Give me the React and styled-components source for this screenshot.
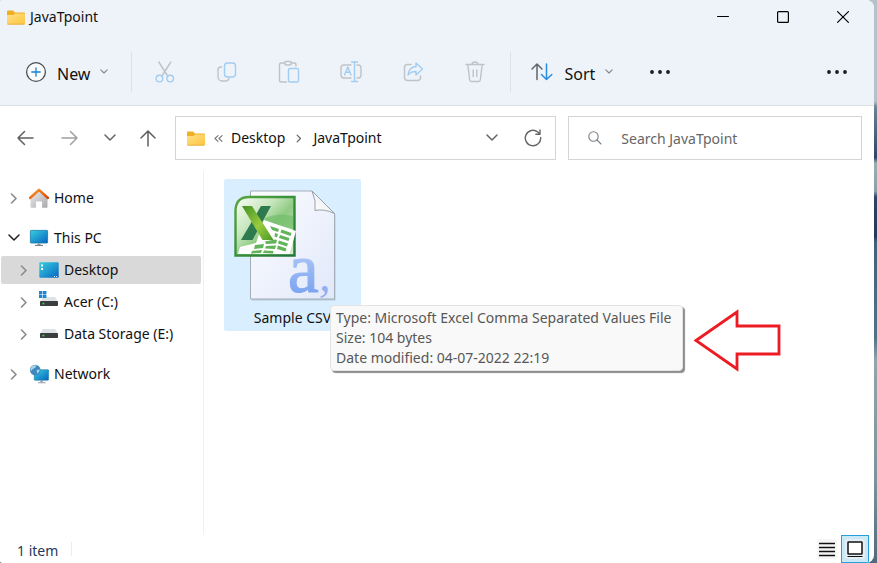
import React from "react";
import styled, { createGlobalStyle, css } from "styled-components";

const GlobalStyle = createGlobalStyle`
  *, *::before, *::after { box-sizing: border-box; }
  body { margin: 0; }
  button, input { font: inherit; color: inherit; }
`;

const DesktopBackdrop = styled.div`
  min-height: 100vh;
  display: flex;
  padding-right: 3px;
  background: linear-gradient(
    180deg,
    #b3c3c8 0%, #b3c3c8 18%, #6b8494 19%, #2f4566 28%,
    #9bafb3 29%, #8aa0a8 34%, #2d4464 35%, #24385c 42%,
    #40617a 43%, #4f7385 60%, #93a4ab 64%, #7e939c 85%, #52697a 100%
  );
  font-family: "Noto Sans", "Open Sans", sans-serif;
  font-size: 14px;
  line-height: 20px;
  color: #111;
`;

const Window = styled.div`
  flex: 1;
  min-width: 0;
  display: flex;
  flex-direction: column;
  background: #fff;
  border-radius: 2px 8px 8px 2px;
  overflow: hidden;
`;

const Chrome = styled.header`
  background: #eef3f9;
  border-bottom: 1px solid #dbe0e4;
`;

const TitleBar = styled.div`
  display: flex;
  align-items: center;
  height: 34px;
  padding: 0 1px 0 7px;
`;

const WindowTitle = styled.h1`
  flex: 1;
  margin: 0 0 0 5px;
  font-size: 14px;
  font-weight: 400;
`;

const PlainButton = styled.button`
  display: inline-flex;
  align-items: center;
  justify-content: center;
  padding: 0;
  border: 0;
  background: transparent;
  width: ${(p) => p.$width || 40}px;
  height: 40px;
  flex: none;
`;

const CaptionButton = styled(PlainButton)`
  height: 34px;
  width: 60px;
`;

const Toolbar = styled.div`
  display: flex;
  align-items: center;
  height: 71px;
  padding: 4px 17px 0 25px;
`;

const MenuButton = styled.button`
  display: inline-flex;
  align-items: center;
  gap: 10px;
  height: 40px;
  padding: 0;
  border: 0;
  background: transparent;
  font-size: 16px;
  flex: none;

  span { padding: 4px 0 0; }
`;

const Divider = styled.div`
  width: 1px;
  height: ${(p) => p.$height || 40}px;
  margin: ${(p) => p.$margin || "0"};
  background: ${(p) => p.$color || "#dce1e6"};
  flex: none;
`;

const Spacer = styled.div`
  flex: 1;
`;

const NavBar = styled.nav`
  display: flex;
  align-items: center;
  padding: 10px 12px 11px 2px;
`;

const NavButtons = styled.div`
  display: grid;
  grid-template-columns: 46px 44px 36px 40px;
  margin-right: 7px;
`;

const AddressBar = styled.div`
  flex: 7 1 0;
  min-width: 0;
  height: 44px;
  display: flex;
  align-items: center;
  padding: 0 2px 0 11px;
  border: 1px solid #d4d4d4;
  background: #fff;
`;

const Crumb = styled.a`
  color: #111;
  text-decoration: none;
`;

const CrumbSeparator = styled.span`
  display: flex;
  margin: 0 11px;
`;

const SearchBox = styled.label`
  flex: 5 1 0;
  min-width: 0;
  height: 44px;
  margin-left: 12px;
  display: flex;
  align-items: center;
  gap: 18px;
  padding: 0 12px 0 18px;
  border: 1px solid #d4d4d4;
  background: #fff;
`;

const SearchInput = styled.input`
  flex: 1;
  min-width: 0;
  border: 0;
  outline: 0;
  padding: 2px 0 0;
  background: transparent;

  &::placeholder { color: #666; opacity: 1; }
`;

const Body = styled.div`
  flex: 1;
  display: flex;
`;

const Sidebar = styled.aside`
  flex: none;
  width: 204px;
  padding: 13px 2px 0 1px;
  border-right: 1px solid #f0f0f0;
`;

const Tree = styled.ul`
  list-style: none;
  margin: 0;
  padding: 0;
  display: flex;
  flex-direction: column;
  gap: ${(p) => (p.$nested ? 4 : 12)}px;
  ${(p) => p.$nested && css`margin-top: 4px;`}
`;

const TreeRow = styled.a`
  display: grid;
  grid-template-columns: 20px 20px 1fr;
  align-items: center;
  column-gap: 5px;
  height: 28px;
  padding-left: ${(p) => (p.$nested ? 13 : 3)}px;
  border-radius: 2px;
  background: ${(p) => (p.$selected ? "#d9d9d9" : "transparent")};
  color: #111;
  text-decoration: none;
  white-space: nowrap;

  svg { justify-self: center; }
`;

const Content = styled.main`
  flex: 1;
  min-width: 0;
  padding: 8px 20px 20px;
`;

const FileTile = styled.div`
  position: relative;
  width: 137px;
  display: flex;
  flex-direction: column;
  align-items: center;
  padding: 9px 0 3px;
  border-radius: 2px;
  background: #d9eeff;
`;

const FileArtwork = styled.svg`
  overflow: visible;
`;

const FileName = styled.div`
  margin-top: 4px;
`;

const Tooltip = styled.div`
  position: absolute;
  top: 126px;
  left: 106px;
  padding: 2px 11px 2px 5px;
  border: 1px solid #e3e3e3;
  border-radius: 4px;
  background: #f9f9f9;
  box-shadow: 2px 2px 1px #8c8c8c;
  color: #575757;
  white-space: nowrap;
`;

const Pointer = styled.svg`
  position: absolute;
  top: 130px;
  left: 469px;
`;

const StatusBar = styled.footer`
  display: flex;
  align-items: center;
  height: 28px;
  padding: 0 5px 0 17px;
  color: #1e395b;
`;

const ItemCount = styled.span`
  padding-top: 3px;
`;

const ViewButton = styled.button`
  display: inline-flex;
  align-items: center;
  justify-content: center;
  width: 28px;
  height: 28px;
  padding: 0;
  border: 1px solid ${(p) => (p.$active ? "#26a0da" : "transparent")};
  background: ${(p) => (p.$active ? "#cbe8f6" : "transparent")};
`;

const Line = ({ w = 20, h = w, box, color = "#5f5f5f", sw = 1.4, children }) => (
  <svg width={w} height={h} viewBox={box || `0 0 ${w} ${h}`} fill="none" stroke={color}
    strokeWidth={sw} strokeLinecap="round" strokeLinejoin="round" aria-hidden="true">
    {children}
  </svg>
);

const GREY = "#bfc3c7";
const BLUE = "#a3cdf0";

const FolderIcon = () => (
  <svg width="18" height="15" viewBox="0 0 18 15" aria-hidden="true">
    <defs>
      <linearGradient id="folder" x1="0" y1="0" x2="1" y2="1">
        <stop offset="0" stopColor="#ffe08a" /><stop offset="1" stopColor="#fdc53c" />
      </linearGradient>
    </defs>
    <path d="M0 1.5Q0 .5 1 .5H6L8 2.5H17Q18 2.5 18 3.5V8H0Z" fill="#efaf25" />
    <path d="M0 5H6.5L8 3.5H17Q18 3.5 18 4.5V13.5Q18 14.5 17 14.5H1Q0 14.5 0 13.5Z" fill="url(#folder)" />
    <path d="M.5 14.2H17.5" stroke="#e2a52c" strokeWidth=".7" />
  </svg>
);

const NewIcon = () => (
  <Line w={22} color="#4a4f55" sw={1.3}>
    <circle cx="11" cy="11" r="9.4" fill="#f8fafc" />
    <path d="M11 6.8V15.2M6.8 11H15.2" stroke="#1780d0" />
  </Line>
);
const SmallChevron = () => (
  <Line w={8} h={5} color="#858585" sw={1.1}><path d="M.8 .8L4 4L7.2 .8" /></Line>
);
const Chevron = ({ dir = "down", color = "#666", small }) => {
  if (dir === "down") return <Line w={12} h={8} color={color} sw={1.5}><path d="M1 1L6 6L11 1" /></Line>;
  return <Line w={small ? 6 : 8} h={small ? 9 : 11} box="0 0 8 11" color={color} sw={1.6}><path d="M1.5 1L6 5.5L1.5 10" /></Line>;
};
const CutIcon = () => (
  <Line w={22} color={GREY}>
    <path d="M4.8 1L13.7 15M16.8 1L7.9 15" />
    <circle cx="5.4" cy="17.6" r="3.3" stroke={BLUE} /><circle cx="16.2" cy="17.6" r="3.3" stroke={BLUE} />
  </Line>
);
const CopyIcon = () => (
  <Line w={22} color={GREY}>
    <path d="M5.5 6H5A3 3 0 0 0 2 9V16A4 4 0 0 0 6 20H9.5A3.5 3.5 0 0 0 13 17.5" />
    <rect x="8.5" y="2" width="11" height="14" rx="3" stroke={BLUE} />
  </Line>
);
const PasteIcon = () => (
  <Line w={22} h={24} color={GREY}>
    <path d="M7 3H3Q1.5 3 1.5 4.5V20.5Q1.5 22 3 22H8.5M13 3H16.5Q18 3 18 4.5V6" />
    <rect x="6.5" y="1.5" width="7" height="3.5" rx="1.7" />
    <rect x="10.5" y="8.5" width="10" height="13.5" rx="1.5" stroke={BLUE} />
  </Line>
);
const RenameIcon = () => (
  <Line w={24} color={GREY}>
    <path d="M12 5H5A3 3 0 0 0 2 8V15A3 3 0 0 0 5 18H12M18 5H19A3 3 0 0 1 22 8V15A3 3 0 0 1 19 18H18" />
    <path d="M12.5 2H18.5M12.5 21.5H18.5M15.5 2V21.5M5.5 15L8.8 7L12 15M6.7 12.3H10.8" stroke={BLUE} />
  </Line>
);
const ShareIcon = () => (
  <Line w={22} color={GREY}>
    <path d="M9 3.5H5.5A3 3 0 0 0 2.5 6.5V16.5A3 3 0 0 0 5.5 19.5H15.5A3 3 0 0 0 18.5 16.5V15" />
    <path d="M14 2L20.5 8L14 14V10.5C10.5 10.3 8 11.5 6 14C6.4 9.2 9 6 14 5.5Z" stroke={BLUE} />
  </Line>
);
const DeleteIcon = () => (
  <Line w={22} color={GREY}>
    <path d="M2 3.5H20M8 3.3A3 2.3 0 0 1 14 3.3M3.8 3.5L5.6 18.5Q5.8 20.5 7.5 20.5H14.5Q16.2 20.5 16.4 18.5L18.2 3.5M9.2 9V15.5M12.8 9V15.5" />
  </Line>
);
const SortIcon = () => (
  <Line w={24} h={20} color="#62666b" sw={1.5}>
    <path d="M7 17.5V2M2 7L7 2L12 7" />
    <path d="M16.5 2V17.5M11.5 12.5L16.5 17.5L21.8 12.5" stroke="#2b8bdc" />
  </Line>
);
const DotsIcon = () => (
  <svg width="22" height="6" viewBox="0 0 22 6" fill="#1b1b1b" aria-hidden="true">
    <circle cx="3" cy="3" r="1.9" /><circle cx="11" cy="3" r="1.9" /><circle cx="19" cy="3" r="1.9" />
  </svg>
);
const ArrowIcon = ({ dir, color }) => (
  <Line w={18} color={color} sw={1.5}>
    {dir === "left" && <path d="M17 9H2M8.5 2.5L2 9L8.5 15.5" />}
    {dir === "right" && <path d="M1 9H16M9.5 2.5L16 9L9.5 15.5" />}
    {dir === "up" && <path d="M9 17V2M2 9L9 2L16 9" />}
  </Line>
);
const RefreshIcon = () => (
  <Line w={18} color="#666" sw={1.4}>
    <path d="M16.7 8.5A7.7 7.7 0 1 1 13.8 3L16 5M16 1V5.2H11.8" />
  </Line>
);
const SearchIcon = () => (
  <Line w={16} color="#7c828c" sw={1.1}><circle cx="6.5" cy="6.5" r="4.7" /><path d="M10 10L14 14" /></Line>
);
const HomeIcon = () => (
  <svg width="20" height="20" viewBox="0 0 20 20" aria-hidden="true">
    <defs>
      <linearGradient id="wall" x1="0" y1="0" x2="1" y2="1"><stop stopColor="#eee" /><stop offset="1" stopColor="#a9a9ac" /></linearGradient>
      <linearGradient id="roof" x1="0" y1="0" x2="1" y2="1"><stop stopColor="#fb9a28" /><stop offset="1" stopColor="#d8490b" /></linearGradient>
    </defs>
    <path d="M1.5 10L10 2L18.5 10V19Q18.5 19.7 17.8 19.7H13V13.5H7V19.7H2.2Q1.5 19.7 1.5 19Z" fill="url(#wall)" />
    <path d="M1 10L10 1.8L19 10" fill="none" stroke="url(#roof)" strokeWidth="2.5" strokeLinejoin="round" strokeLinecap="round" />
  </svg>
);
const ScreenGradient = () => (
  <defs>
    <linearGradient id="screen" x1="0" y1="0" x2="1" y2="1"><stop stopColor="#36d0e0" /><stop offset="1" stopColor="#0864c0" /></linearGradient>
  </defs>
);
const PcIcon = () => (
  <svg width="20" height="18" viewBox="0 0 20 18" aria-hidden="true">
    <ScreenGradient />
    <rect x="1.4" y="1.4" width="17.2" height="12.6" rx=".6" fill="url(#screen)" stroke="#1478a6" strokeWidth=".8" />
    <path d="M8.5 14.4H11.5V16H8.5Z" fill="#8d9ba5" /><path d="M6 16.4H14" stroke="#68747d" />
  </svg>
);
const DesktopIcon = () => (
  <svg width="20" height="16" viewBox="0 0 20 16" aria-hidden="true">
    <ScreenGradient />
    <rect x=".3" y=".3" width="19.4" height="15.4" rx="1" fill="url(#screen)" />
    <path d="M2 2.5H4V4.5H2ZM2 6H4V8H2Z" fill="#fff" />
    <path d="M15 14.5H16M17 14.5H18" stroke="#d9efff" />
  </svg>
);
const DriveIcon = ({ windows }) => (
  <svg width="20" height="22" viewBox="0 0 20 22" aria-hidden="true">
    <path d="M4 6H16L18.8 10.5H1.2Z" fill="#dfe2e5" />
    <rect x="1" y="10" width="18" height="5" rx=".8" fill="#3c3d3f" />
    <rect x="3.5" y="11.8" width="1.8" height="1.6" fill="#35e04c" />
    {windows && <path d="M0 0H3.4V3.2H0ZM4 0H7.4V3.2H4ZM0 3.8H3.4V7H0ZM4 3.8H7.4V7H4Z" fill="#1d84d3" />}
  </svg>
);
const NetworkIcon = () => (
  <svg width="20" height="20" viewBox="0 0 21 20" aria-hidden="true">
    <ScreenGradient />
    <rect x="5.5" y="5.5" width="15" height="11" rx=".6" fill="url(#screen)" stroke="#1478a6" strokeWidth=".6" />
    <path d="M12 16.5H14.5V18.5H12Z" fill="#8d9ba5" /><path d="M9.5 19.2H17.5" stroke="#8997a1" />
    <circle cx="6.5" cy="5.8" r="5.6" fill="#3f88bd" />
    <path d="M3 2.2Q6 0 8 1.2L6.5 3.5L4 4.8L2 7Q.6 5 3 2.2ZM8 6L11 5Q11.5 8 8.5 9.5Z" fill="#a9d4e6" />
  </svg>
);

const CsvIcon = () => (
  <FileArtwork width="121" height="116" viewBox="0 0 121 116" aria-hidden="true">
    <defs>
      <linearGradient id="paper" x1="0" y1="0" x2="1" y2="1"><stop stopColor="#fdfdff" /><stop offset="1" stopColor="#e1e8fa" /></linearGradient>
      <linearGradient id="badge" x1="0" y1="0" x2="1" y2="1"><stop stopColor="#fafdf7" /><stop offset=".35" stopColor="#c8e6bd" /><stop offset=".55" stopColor="#8fcb84" /><stop offset="1" stopColor="#d7eccb" /></linearGradient>
      <linearGradient id="rim" x1="0" y1="0" x2="1" y2="1"><stop stopColor="#55a83e" /><stop offset="1" stopColor="#207638" /></linearGradient>
      <linearGradient id="leaf" x1="0" y1="0" x2="1" y2="1"><stop stopColor="#3f8f24" /><stop offset=".55" stopColor="#9acb3d" /><stop offset="1" stopColor="#4d9928" /></linearGradient>
      <linearGradient id="glyph" x1="0" y1="0" x2="0" y2="1"><stop offset=".3" stopColor="#aac5f6" /><stop offset="1" stopColor="#6c98ee" /></linearGradient>
      <linearGradient id="fold" x1="0" y1="1" x2="1" y2="0"><stop stopColor="#fff" /><stop offset=".5" stopColor="#f4f4f6" /><stop offset="1" stopColor="#a8adb5" /></linearGradient>
    </defs>
    <path d="M19.5 4H80.5L103.5 27V112.5H19.5Z" fill="#9fb0c0" opacity=".6" />
    <path d="M18.5 3H80L102.5 25.5V111H18.5Z" fill="url(#paper)" stroke="#a3adb8" />
    <path d="M80 3Q84.5 13 83 22.5Q92 20.5 102.5 25.5Z" fill="url(#fold)" stroke="#8f969e" strokeWidth=".9" />
    <text x="56" y="104" fontFamily="Liberation Serif, serif" fontSize="69" fill="url(#glyph)" stroke="url(#glyph)" strokeWidth="1.2">a</text>
    <text x="87" y="103" fontFamily="Liberation Serif, serif" fontStyle="italic" fontSize="46" fill="#8fb0f2">,</text>
    <path d="M3.5 67.5V21.5Q4.5 9 17 9H62.5V67.5Z" fill="url(#badge)" stroke="url(#rim)" strokeWidth="2.4" />
    <path d="M33 30Q48 24 61 28V41L32 33Z" fill="#70bd69" opacity=".7" />
    <path d="M32 32L64 43L57.5 66H6L8 59L24 55Z" fill="#fff" />
    <g fill="#62b45b">
      <path d="M38 38L47 41L46 44L40 42ZM49.5 41.5L59.5 45L58.5 48L48.5 44.5Z" />
      <path d="M43 45L46 46L45 49.5L42.5 48.5ZM48 47L57.5 50L56.5 53L47 50Z" />
      <path d="M33 53.5L43 51.5L45 52L44 55.5L34 56ZM47 52.5L56 55.5L55 58.5L46 55.5Z" />
      <path d="M23 57L32 56L31 60L22 61ZM34 58L44 57.5L43 61L33 60.5ZM46 57.5L54.5 60.5L53.5 63.5L45 61Z" />
      <path d="M20 63L30 62L29 65L19 65.5ZM32 62.5L41.5 63L41 65.5L31 65Z" />
    </g>
    <path d="M29 18H39L20.5 52H9Z" fill="#2d7a4e" />
    <path d="M10 18H20L41.5 52H30.5Z" fill="url(#leaf)" />
  </FileArtwork>
);

const ListViewIcon = () => (
  <svg width="20" height="20" viewBox="0 0 20 20" aria-hidden="true">
    <rect width="20" height="20" rx="2" fill="#f5f5f5" />
    <path d="M2 4.5H18M2 8.5H18M2 12.5H18M2 16.5H18" stroke="#111" strokeWidth="1.3" />
  </svg>
);
const LargeViewIcon = () => (
  <svg width="20" height="20" viewBox="0 0 20 20" aria-hidden="true">
    <rect width="20" height="20" rx="2" fill="#e4eef5" />
    <rect x="3" y="3" width="14" height="12" rx=".5" fill="#fff" stroke="#111" strokeWidth="1.5" />
    <path d="M2.5 17.5H17.5" stroke="#111" strokeWidth="1.2" />
  </svg>
);

const editActions = [
  ["Cut", CutIcon], ["Copy", CopyIcon], ["Paste", PasteIcon],
  ["Rename", RenameIcon], ["Share", ShareIcon], ["Delete", DeleteIcon],
];

const drives = [
  { label: "Desktop", icon: <DesktopIcon />, selected: true },
  { label: "Acer (C:)", icon: <DriveIcon windows /> },
  { label: "Data Storage (E:)", icon: <DriveIcon /> },
];

const TreeItem = ({ label, icon, open, nested, selected, children }) => (
  <li>
    <TreeRow href="#" $nested={nested} $selected={selected}>
      <Chevron dir={open ? "down" : "right"} color={open ? "#222" : "#8a8a8a"} />
      {icon}
      {label}
    </TreeRow>
    {children}
  </li>
);

export default function App() {
  return (
    <DesktopBackdrop>
      <GlobalStyle />
      <Window>
        <Chrome>
          <TitleBar>
            <FolderIcon />
            <WindowTitle>JavaTpoint</WindowTitle>
            <CaptionButton aria-label="Minimize"><Line w={12} color="#000" sw={1}><path d="M.5 5.5H11.5" /></Line></CaptionButton>
            <CaptionButton aria-label="Maximize"><Line w={12} color="#000" sw={1.2}><rect x=".6" y=".6" width="10.8" height="10.8" rx="1" /></Line></CaptionButton>
            <CaptionButton aria-label="Close"><Line w={12} color="#000" sw={1.2}><path d="M.6 .6L11.4 11.4M11.4 .6L.6 11.4" /></Line></CaptionButton>
          </TitleBar>
          <Toolbar>
            <MenuButton><NewIcon /><span>New</span><SmallChevron /></MenuButton>
            <Divider $margin="0 2px 0 23px" />
            {editActions.map(([name, Icon]) => (
              <PlainButton key={name} $width={62} aria-label={name} disabled><Icon /></PlainButton>
            ))}
            <Divider $margin="0 19px 0 4px" />
            <MenuButton><SortIcon /><span>Sort</span><SmallChevron /></MenuButton>
            <Divider $margin="0 26px 0 0" $color="transparent" />
            <PlainButton aria-label="See more"><DotsIcon /></PlainButton>
            <Spacer />
            <PlainButton aria-label="More options"><DotsIcon /></PlainButton>
          </Toolbar>
        </Chrome>
        <NavBar aria-label="Location">
          <NavButtons>
            <PlainButton $width={46} aria-label="Back"><ArrowIcon dir="left" color="#5f5f5f" /></PlainButton>
            <PlainButton $width={44} aria-label="Forward"><ArrowIcon dir="right" color="#a0a0a0" /></PlainButton>
            <PlainButton $width={36} aria-label="Recent locations"><Chevron /></PlainButton>
            <PlainButton aria-label="Up"><ArrowIcon dir="up" color="#5f5f5f" /></PlainButton>
          </NavButtons>
          <AddressBar>
            <FolderIcon />
            <PlainButton $width={26} aria-label="Parent folders">
              <Line w={9} h={7} color="#777" sw={1.1}><path d="M4 .7L1 3.5L4 6.3M8 .7L5 3.5L8 6.3" /></Line>
            </PlainButton>
            <Crumb href="#">Desktop</Crumb>
            <CrumbSeparator><Chevron dir="right" small /></CrumbSeparator>
            <Crumb href="#">JavaTpoint</Crumb>
            <Spacer />
            <PlainButton $width={43} aria-label="Previous locations"><Chevron /></PlainButton>
            <PlainButton aria-label="Refresh"><RefreshIcon /></PlainButton>
          </AddressBar>
          <SearchBox>
            <SearchIcon />
            <SearchInput type="search" aria-label="Search JavaTpoint" placeholder="Search JavaTpoint" />
          </SearchBox>
        </NavBar>
        <Body>
          <Sidebar>
            <Tree>
              <TreeItem label="Home" icon={<HomeIcon />} />
              <TreeItem label="This PC" icon={<PcIcon />} open>
                <Tree $nested>
                  {drives.map((d) => <TreeItem key={d.label} nested {...d} />)}
                </Tree>
              </TreeItem>
              <TreeItem label="Network" icon={<NetworkIcon />} />
            </Tree>
          </Sidebar>
          <Content>
            <FileTile>
              <CsvIcon />
              <FileName>Sample CSV</FileName>
              <Tooltip role="tooltip">
                <div>Type: Microsoft Excel Comma Separated Values File</div>
                <div>Size: 104 bytes</div>
                <div>Date modified: 04-07-2022 22:19</div>
              </Tooltip>
              <Pointer width="90" height="64" viewBox="0 0 90 64" aria-hidden="true">
                <path d="M3 31.5L44 3V17H86V45H44V60Z" fill="none" stroke="#ed1c24" strokeWidth="2.8" />
              </Pointer>
            </FileTile>
          </Content>
        </Body>
        <StatusBar>
          <ItemCount>1 item</ItemCount>
          <Divider $height={14} $margin="0 0 0 13px" $color="#ececec" />
          <Spacer />
          <ViewButton aria-label="Details view"><ListViewIcon /></ViewButton>
          <ViewButton aria-label="Large icons view" $active><LargeViewIcon /></ViewButton>
        </StatusBar>
      </Window>
    </DesktopBackdrop>
  );
}
